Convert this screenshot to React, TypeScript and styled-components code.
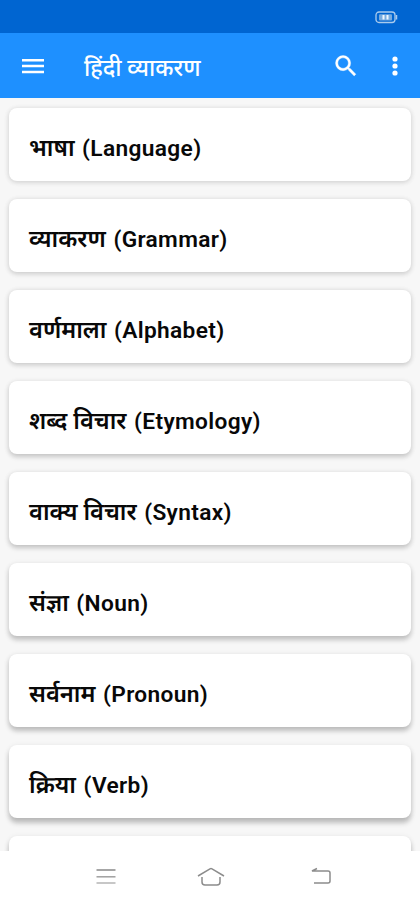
import React from "react";
import styled, { createGlobalStyle } from "styled-components";

const Global = createGlobalStyle`
  * { box-sizing: border-box; }
  html, body, #root { margin: 0; height: 900px; overflow: hidden; }
  body { font-family: Roboto, "Noto Sans Devanagari", "Noto Sans", sans-serif; }
  svg { display: block; flex: none; }
`;
const Screen = styled.div`
  width: 420px;
  height: 900px;
  display: flex;
  flex-direction: column;
  background: #f7f7f7;
  overflow: hidden;
`;
const StatusBar = styled.div`
  height: 33px;
  flex: none;
  background: #0065d1;
  display: flex;
  justify-content: flex-end;
  padding: 11px 22px 0 0;
`;
const AppBar = styled.header`
  height: 65px;
  flex: none;
  background: #1e90ff;
  display: flex;
  align-items: center;
  padding: 0 13px 0 21px;
`;
const Title = styled.h1`
  margin: 4px 0 0 39px;
  flex: 1;
  color: #fff;
  font-size: 23.2px;
  line-height: 32px;
  font-weight: 550;
  white-space: nowrap;
`;
const IconButton = styled.button<{ $gap?: number }>`
  border: 0;
  padding: 0;
  background: none;
  margin-left: ${(p) => p.$gap ?? 0}px;
`;
const List = styled.main`
  flex: 1;
  min-height: 0;
  overflow: hidden;
  display: flex;
  flex-direction: column;
  gap: 18px;
  padding: 10px 9px 0;
`;
const Card = styled.div<{ $depth: number }>`
  height: 73px;
  flex: none;
  border-radius: 8px;
  background: #fff;
  box-shadow:
    0 ${(p) => 1 + p.$depth * 0.45}px 5px rgba(0, 0, 0, ${(p) => 0.12 + p.$depth * 0.015}),
    0 1px 6px rgba(0, 0, 0, 0.07);
  display: flex;
  align-items: baseline;
  gap: 7.5px;
  padding: 24px 20px 0;
  color: #080808;
  line-height: 32px;
  white-space: nowrap;
`;
const Hindi = styled.span`
  font-size: 23.7px;
  font-weight: 600;
`;
const English = styled.span`
  font-size: 22.7px;
  font-weight: 600;
  letter-spacing: 0.35px;
`;
const NavBar = styled.nav`
  height: 49px;
  flex: none;
  background: #fff;
  display: flex;
  align-items: center;
  padding: 2px 0 0 95px;
  gap: 81px;
`;
const BackIcon = styled.svg`
  margin-left: 5px;
`;

const items = [
  ["भाषा", "Language"],
  ["व्याकरण", "Grammar"],
  ["वर्णमाला", "Alphabet"],
  ["शब्द विचार", "Etymology"],
  ["वाक्य विचार", "Syntax"],
  ["संज्ञा", "Noun"],
  ["सर्वनाम", "Pronoun"],
  ["क्रिया", "Verb"],
];

export default function App() {
  return (
    <>
      <Global />
      <Screen>
        <StatusBar>
          <svg width="23" height="13" viewBox="0 0 23 13">
            <rect x="1" y="1" width="19" height="10.5" rx="3" fill="none" stroke="#a9cbed" strokeWidth="1.3" />
            <rect x="4" y="3.2" width="13" height="6.2" rx="1" fill="#78acdf" />
            <path d="M8.5 4v4.5M12.5 4v4.5" stroke="#eef7ff" strokeWidth="2" />
            <path d="M21.5 4v4.5" stroke="#a9cbed" strokeWidth="1.5" />
          </svg>
        </StatusBar>
        <AppBar>
          <IconButton aria-label="Menu">
            <svg width="24" height="24" viewBox="0 0 24 24" stroke="#fff" strokeWidth="2.5">
              <path d="M1 6.3h22M1 12h22M1 17.9h22" />
            </svg>
          </IconButton>
          <Title>हिंदी व्याकरण</Title>
          <IconButton aria-label="Search">
            <svg width="28" height="28" viewBox="0 0 24 24" fill="#fff" stroke="#fff" strokeWidth="0.3">
              <path d="M15.5 14h-.79l-.28-.27A6.471 6.471 0 0 0 16 9.5 6.5 6.5 0 1 0 9.5 16c1.61 0 3.09-.59 4.23-1.57l.27.28v.79l5 4.99L20.49 19l-4.99-5zm-6 0C7.01 14 5 11.99 5 9.5S7.01 5 9.5 5 14 7.01 14 9.5 11.99 14 9.5 14z" />
            </svg>
          </IconButton>
          <IconButton $gap={23} aria-label="More options">
            <svg width="24" height="24" viewBox="0 0 24 24" fill="#fff">
              <circle cx="12" cy="5" r="2.6" />
              <circle cx="12" cy="12" r="2.6" />
              <circle cx="12" cy="19" r="2.6" />
            </svg>
          </IconButton>
        </AppBar>
        <List>
          {items.map(([hi, en], i) => (
            <Card key={en} $depth={i}>
              <Hindi>{hi}</Hindi>
              <English>({en})</English>
            </Card>
          ))}
          <Card $depth={8} />
        </List>
        <NavBar>
          <svg width="21" height="20" viewBox="0 0 21 20" strokeWidth="1.5">
            <path d="M1.5 3h19" stroke="#888" />
            <path d="M1.5 9.8h19" stroke="#a0a0a0" />
            <path d="M1.5 16h19" stroke="#b5b5b5" />
          </svg>
          <svg width="28" height="20" viewBox="0 0 28 20" fill="none" stroke="#8c8c8c" strokeWidth="1.5">
            <path d="M1 9 13 1.8q1-.5 2 0L27 9M5 10v5q0 3 3 3h12q3 0 3-3v-5" />
          </svg>
          <BackIcon width="21" height="20" viewBox="0 0 21 20" fill="none" stroke="#8c8c8c" strokeWidth="1.5">
            <path d="M6 1.5 1 4h16q2 0 2 2v8q0 2-2 2H3" />
          </BackIcon>
        </NavBar>
      </Screen>
    </>
  );
}
